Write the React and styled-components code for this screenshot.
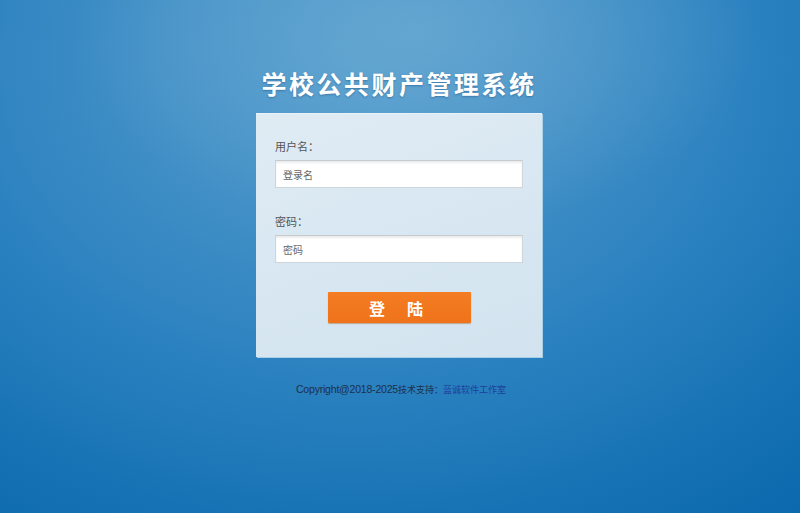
import React from "react";
import styled, { createGlobalStyle } from "styled-components";

const Global = createGlobalStyle`
  html, body { margin: 0; padding: 0; height: 100%; }
  body {
    font-family: "Liberation Sans", "Noto Sans CJK SC", sans-serif;
    background: #0a68ab;
  }
  #root { min-height: 100%; }
`;

const Page = styled.div`
  min-height: 513px;
  box-sizing: border-box;
  display: flex;
  flex-direction: column;
  align-items: center;
  padding-top: 68px;
  background:
    radial-gradient(ellipse 340px 200px at 52% 6%, rgba(120, 178, 215, 0.55) 0%, rgba(120, 178, 215, 0) 100%),
    radial-gradient(ellipse 760px 600px at 44% 12%, #4f9acb 0%, #4491c7 25%, #2c82c0 52%, #1672b4 78%, #0966aa 100%);
`;

const Title = styled.h1`
  margin: 0 2px 15px 0;
  font-family: "Noto Sans CJK SC", sans-serif;
  font-size: 25px;
  line-height: 30px;
  font-weight: 700;
  color: #ffffff;
  letter-spacing: 2.5px;
  text-shadow: 0 1px 2px rgba(0, 50, 100, 0.35);
`;

const Card = styled.form`
  width: 286px;
  margin-right: 2px;
  box-sizing: border-box;
  padding: 25px 19px 34px;
  background: linear-gradient(160deg, #e0ecf4 0%, #d8e7f2 50%, #d2e3ef 100%);
  border-top: 1px solid #e9f2f8;
  box-shadow: 1px 1px 0 rgba(200, 225, 240, 0.8);
`;

const Label = styled.div`
  font-family: "Noto Sans CJK SC", sans-serif;
  font-size: 11px;
  line-height: 14px;
  color: #555;
  margin-top: ${(p) => p.$top || 0}px;
  margin-bottom: 7px;
`;

const Input = styled.input`
  display: block;
  width: 248px;
  height: 28px;
  box-sizing: border-box;
  border: 1px solid #cfd6db;
  border-top-color: #c4cace;
  box-shadow: inset 0 2px 2px rgba(0, 0, 0, 0.08);
  background: #fff;
  padding: 0 7px;
  font-family: "Noto Sans CJK SC", sans-serif;
  font-size: 10px;
  color: #333;
  outline: none;
  &::placeholder { color: #666; }
`;

const ButtonRow = styled.div`
  display: flex;
  justify-content: center;
  margin-top: 29px;
`;

const Button = styled.button`
  width: 143px;
  height: 31px;
  border: none;
  border-radius: 1px;
  background: linear-gradient(#f47c22, #ef731a);
  box-shadow: 0 1px 1px rgba(160, 70, 0, 0.4);
  color: #fff;
  font-family: "Noto Sans CJK SC", sans-serif;
  font-size: 16px;
  font-weight: 700;
  letter-spacing: 22px;
  padding-left: 22px;
  cursor: pointer;
`;

const Footer = styled.p`
  margin: 25px 0 0 2px;
  font-family: "Liberation Sans", "Noto Sans CJK SC", sans-serif;
  font-size: 10.5px;
  line-height: 14px;
  letter-spacing: -0.2px;
  color: #1d2f4a;
`;

const Cjk = styled.span`
  font-family: "Noto Sans CJK SC", sans-serif;
  font-size: 9px;
  letter-spacing: 0;
  color: ${(p) => p.$color || "inherit"};
`;

const FooterLink = styled.a`
  color: #1c3f9a;
  text-decoration: none;
`;

export default function App() {
  return (
    <>
      <Global />
      <Page>
        <Title>学校公共财产管理系统</Title>
        <Card onSubmit={(e) => e.preventDefault()}>
          <Label>用户名：</Label>
          <Input type="text" placeholder="登录名" />
          <Label $top={26}>密码：</Label>
          <Input type="password" placeholder="密码" />
          <ButtonRow>
            <Button type="submit">登陆</Button>
          </ButtonRow>
        </Card>
        <Footer>
          Copyright@2018-2025<Cjk>技术支持：</Cjk>
          <FooterLink href="#">
            <Cjk $color="#1c3f9a">蓝诚软件工作室</Cjk>
          </FooterLink>
        </Footer>
      </Page>
    </>
  );
}
